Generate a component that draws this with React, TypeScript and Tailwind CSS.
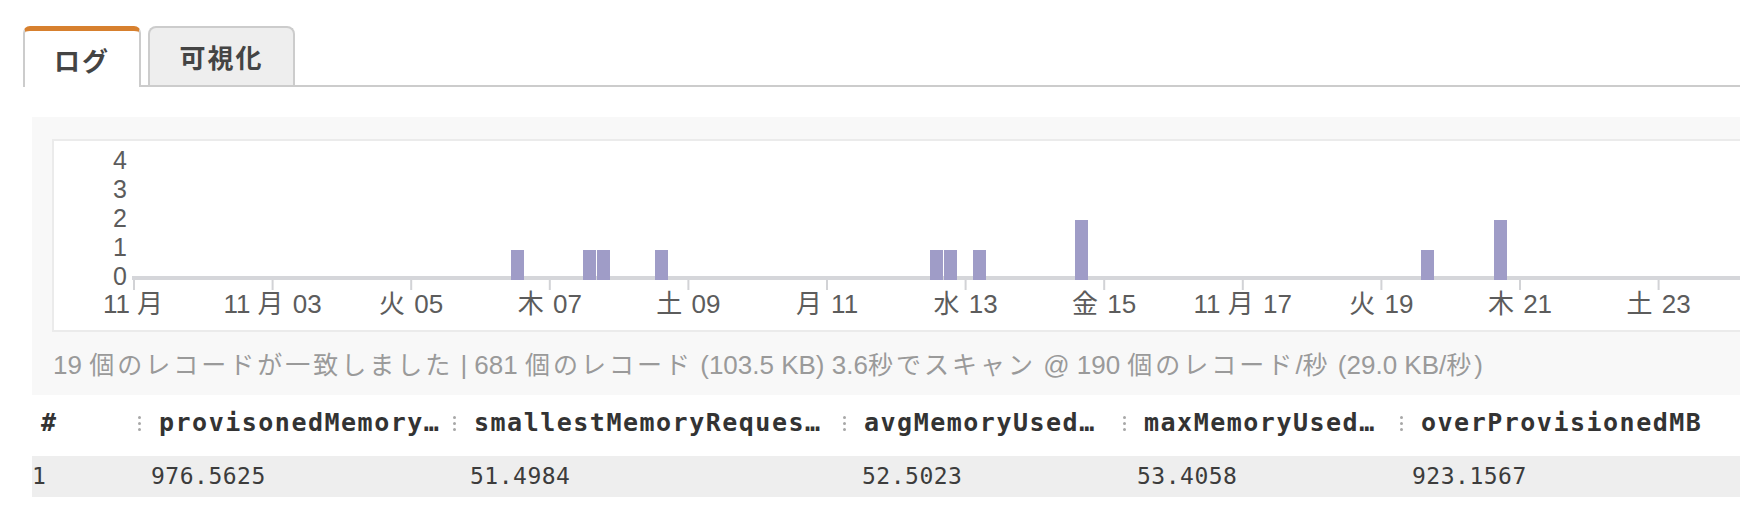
import React from "react";

// ---- chart data (page px measured, chart box origin at 54,141) ----
const ORIGIN_X = 54;
const ORIGIN_Y = 141;
const BASE = 280 - ORIGIN_Y; // bottom of bars
const UNIT = 30;

const bars: { x: number; h: number }[] = [
  { x: 511, h: 1 },
  { x: 583, h: 1 },
  { x: 597, h: 1 },
  { x: 655, h: 1 },
  { x: 930, h: 1 },
  { x: 944, h: 1 },
  { x: 973, h: 1 },
  { x: 1075, h: 2 },
  { x: 1421, h: 1 },
  { x: 1494, h: 2 },
];

const xLabels = [
  "11 月",
  "11 月 03",
  "火 05",
  "木 07",
  "土 09",
  "月 11",
  "水 13",
  "金 15",
  "11 月 17",
  "火 19",
  "木 21",
  "土 23",
];

const columns = [
  { name: "provisonedMemory…", value: "976.5625", pad: "pl-[13px]" },
  { name: "smallestMemoryReques…", value: "51.4984", pad: "pl-[17px]" },
  { name: "avgMemoryUsed…", value: "52.5023", pad: "pl-[19px]" },
  { name: "maxMemoryUsed…", value: "53.4058", pad: "pl-[14px]" },
  { name: "overProvisionedMB", value: "923.1567", pad: "pl-[12px]" },
];

const CJK_SPLIT = /([\u3000-\u30ff\u4e00-\u9fff\uff00-\uffef]+)/;

// CJK runs get a bit more width, like the original font
function Jp({ text }: { text: string }) {
  const parts = text.split(CJK_SPLIT);
  return (
    <>
      {parts.map((p, i) =>
        i % 2 ? (
          <span key={i} className="text-[25px] tracking-[3px]">
            {p}
          </span>
        ) : (
          <React.Fragment key={i}>{p}</React.Fragment>
        )
      )}
    </>
  );
}

function SvgLabel({ text, x, y }: { text: string; x: number; y: number }) {
  const parts = text.split(CJK_SPLIT);
  return (
    <text x={x} y={y} textAnchor="middle" dominantBaseline="central" fill="#5c5c5c" fontSize={26}>
      {parts.map((p, i) =>
        i % 2 ? (
          <tspan key={i} letterSpacing={2}>
            {p}
          </tspan>
        ) : (
          <tspan key={i}>{p}</tspan>
        )
      )}
    </text>
  );
}

function Histogram() {
  const firstTick = 134 - ORIGIN_X;
  const step = 138.6;
  return (
    <svg width={1700} height={189} className="block font-['Liberation_Sans','Noto_Sans_CJK_JP',sans-serif]">
      {/* y axis labels */}
      {[0, 1, 2, 3, 4].map((v) => (
        <text
          key={v}
          x={127 - ORIGIN_X}
          y={276 - ORIGIN_Y - v * 29}
          textAnchor="end"
          dominantBaseline="central"
          fill="#5c5c5c"
          fontSize={25}
        >
          {v}
        </text>
      ))}

      {/* axis */}
      <rect x={132 - ORIGIN_X} y={276 - ORIGIN_Y} width={1700} height={4} fill="#d5d6da" />
      {xLabels.map((l, i) => (
        <g key={l}>
          <rect x={firstTick + i * step - 1} y={BASE} width={2} height={10} fill="#d2d3d6" />
          <SvgLabel text={l} x={firstTick + i * step} y={304 - ORIGIN_Y} />
        </g>
      ))}

      {/* bars */}
      {bars.map((b) => (
        <rect
          key={b.x}
          x={b.x - ORIGIN_X}
          y={BASE - b.h * UNIT}
          width={13}
          height={b.h * UNIT}
          fill="#9f9cc7"
        />
      ))}
    </svg>
  );
}

// column resize handle: three little dots
function Grip() {
  return (
    <span className="flex w-[21px] shrink-0 flex-col gap-[3px]">
      <span className="h-[3px] w-[3px] rounded-full bg-[#a8a8a8]" />
      <span className="h-[3px] w-[3px] rounded-full bg-[#a8a8a8]" />
      <span className="h-[3px] w-[3px] rounded-full bg-[#a8a8a8]" />
    </span>
  );
}

export default function App() {
  return (
    <div className="relative h-[520px] w-full overflow-hidden bg-white font-['Liberation_Sans','Noto_Sans_CJK_JP',sans-serif]">
      {/* tabs */}
      <div className="flex items-end pl-[23px] pt-[26px]">
        <div className="flex h-[61px] w-[118px] items-center justify-center rounded-t-[7px] border-x-2 border-t-[5px] border-x-[#cccccc] border-t-[#d7802e] bg-white">
          <span className="font-['Noto_Sans_CJK_JP',sans-serif] text-[26px] font-bold tracking-[2px] text-[#444444]">ログ</span>
        </div>
        <div className="flex flex-1 items-end border-b-2 border-[#cccccc] pl-[7px]">
          <div className="flex h-[59px] w-[147px] items-center justify-center rounded-t-[8px] border-2 border-b-0 border-[#cccccc] bg-[#eeeeee]">
            <span className="font-['Noto_Sans_CJK_JP',sans-serif] text-[26px] font-bold tracking-[2px] text-[#444444]">可視化</span>
          </div>
        </div>
      </div>

      {/* histogram panel */}
      <div className="ml-[32px] mt-[30px] w-[1740px] bg-[#f8f8f8] px-[20px] pb-[14px] pt-[22px]">
        <div className="h-[193px] border-2 border-[#ebebeb] bg-white">
          <Histogram />
        </div>
        <div className="mt-[17px] whitespace-nowrap pl-[1px] text-[26px] leading-[32px] text-[#9a9a9a]">
          <Jp text="19 個のレコードが一致しました | 681 個のレコード (103.5 KB) 3.6秒でスキャン @ 190 個のレコード/秒 (29.0 KB/秒)" />
        </div>
      </div>

      {/* results table */}
      <div className="ml-[32px] w-[1740px] font-['DejaVu_Sans_Mono',monospace]">
        <div className="mt-[5px] grid h-[46px] grid-cols-[106px_315px_390px_280px_277px_1fr] items-center text-[25px] font-bold tracking-[1.5px] text-[#333333]">
          <div className="pl-[9px]">#</div>
          {columns.map((c) => (
            <div key={c.name} className="flex items-center whitespace-nowrap">
              <Grip />
              <span>{c.name}</span>
            </div>
          ))}
        </div>
        <div className="mt-[10px] grid h-[41px] grid-cols-[106px_315px_390px_280px_277px_1fr] items-center bg-[#eeeeee] text-[23px] tracking-[0.5px] text-[#3c3c3c]">
          <div>1</div>
          {columns.map((c) => (
            <div key={c.name} className={c.pad}>
              {c.value}
            </div>
          ))}
        </div>
      </div>
    </div>
  );
}
